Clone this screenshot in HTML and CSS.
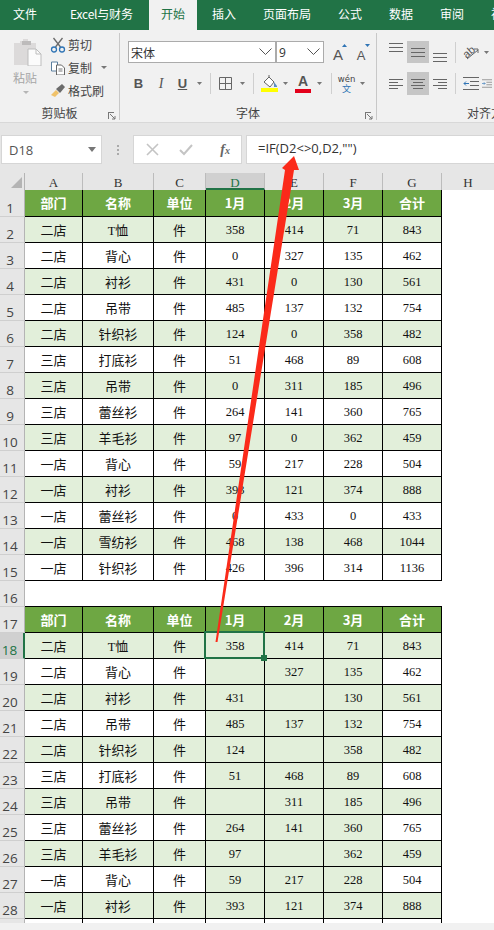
FILE: index.html
```html
<!DOCTYPE html>
<html lang="zh">
<head>
<meta charset="utf-8">
<title>Excel</title>
<link rel="stylesheet" href="styles.css">
</head>
<body>
<div class="app">
  <nav class="tabs">
    <span class="tab first">文件</span>
    <span class="tab wide">Excel与财务</span>
    <span class="tab active">开始</span>
    <span class="tab">插入</span>
    <span class="tab">页面布局</span>
    <span class="tab">公式</span>
    <span class="tab">数据</span>
    <span class="tab">审阅</span>
    <span class="tab">视图</span>
  </nav>

  <section class="ribbon">
    <div class="group g-clip">
      <div class="clip-body">
        <div class="paste">
          <svg width="30" height="28" viewBox="0 0 30 28"><path d="M1 5h6V3h3V1h5v2h3v2h5v22H1z" fill="#dcdada"/><path d="M9 3h9v4H9z" fill="#bdbbbb"/><path d="M15 11h8l5 5v12H15z" fill="#fbfbfb" stroke="#bdbdbd"/><path d="M23 11v5h5" fill="none" stroke="#bdbdbd"/></svg>
          <span class="paste-label">粘贴</span>
          <svg class="caret-s" width="6" height="4" viewBox="0 0 6 4"><path d="M0 0h6L3 3z" fill="#b5b5b5"/></svg>
        </div>
        <div class="clip-list">
          <div class="clip-item">
            <svg width="15" height="16" viewBox="0 0 15 16"><path d="M3 1l7 9M12 1L5 10" stroke="#6a6a6a" stroke-width="1.3" fill="none"/><circle cx="3.5" cy="12.5" r="2.5" fill="none" stroke="#2f74b5" stroke-width="1.3"/><circle cx="11.5" cy="12.5" r="2.5" fill="none" stroke="#2f74b5" stroke-width="1.3"/></svg>
            <span>剪切</span>
          </div>
          <div class="clip-item">
            <svg width="15" height="14" viewBox="0 0 15 14"><path d="M1 1h6v9H1z" fill="#fff" stroke="#5b7f9f"/><path d="M6 4h5l3 3v7H6z" fill="#fff" stroke="#666"/><path d="M8 8h4M8 10h4" stroke="#777"/></svg>
            <span>复制</span>
            <svg class="caret-c" width="6" height="4" viewBox="0 0 6 4"><path d="M0 0h6L3 3z" fill="#777"/></svg>
          </div>
          <div class="clip-item">
            <svg width="16" height="14" viewBox="0 0 16 14"><path d="M1 11l5-5 3 3-4 4z" fill="#f0c26a"/><path d="M6 5l6-5 3 3-5 6z" fill="#6b6b6b"/></svg>
            <span>格式刷</span>
          </div>
        </div>
      </div>
      <div class="group-label">剪贴板<svg class="launcher" width="8" height="8" viewBox="0 0 8 8"><path d="M0 .5h6M.5 0v7M2 2l5 5M4 7h3V4" stroke="#777" fill="none"/></svg></div>
    </div>

    <div class="group g-font">
      <div class="group-body">
        <div class="row">
          <div class="field f-name"><span>宋体</span><svg width="13" height="8" viewBox="0 0 13 8"><path d="M.5.5l6 6 6-6" stroke="#555" fill="none"/></svg></div>
          <div class="field f-size"><span>9</span><svg width="13" height="8" viewBox="0 0 13 8"><path d="M.5.5l6 6 6-6" stroke="#555" fill="none"/></svg></div>
          <div class="grow-a">
            <span class="big-a">A</span><svg class="tick up" width="5" height="3" viewBox="0 0 5 3"><path d="M0 3h5L2.500 0z" fill="#2f74b5"/></svg>
          </div>
          <div class="grow-a second">
            <span class="small-a">A</span><svg class="tick" width="5" height="3" viewBox="0 0 5 3"><path d="M0 0h5L2.500 3z" fill="#2f74b5"/></svg>
          </div>
        </div>
        <div class="row">
          <span class="slot w21 fmt bold">B</span>
          <span class="slot w24 fmt ital">I</span>
          <span class="slot w19 fmt under">U</span>
          <span class="slot w15"><svg width="5" height="3" viewBox="0 0 5 3"><path d="M0 0h5L2.500 3z" fill="#777"/></svg></span>
          <span class="slot w6"><i class="sep"></i></span>
          <span class="slot w25"><svg width="13" height="13" viewBox="0 0 13 13"><path d="M.5.500h12v12H.5zM6.500.500v12M.5 6.500h12" stroke="#666" fill="none"/></svg></span>
          <span class="slot w9"><svg width="5" height="3" viewBox="0 0 5 3"><path d="M0 0h5L2.500 3z" fill="#777"/></svg></span>
          <span class="slot w12"><i class="sep"></i></span>
          <span class="slot w20"><svg width="17" height="17" viewBox="0 0 17 17"><path d="M3 7l5-5 5 5-4 5z" fill="#fff" stroke="#666"/><path d="M8 0v3" stroke="#666"/><path d="M13 7l3 4v1h-3z" fill="#5b8fc0"/><path d="M0 13h17v4H0z" fill="#ffff00"/></svg></span>
          <span class="slot w13"><svg width="5" height="3" viewBox="0 0 5 3"><path d="M0 0h5L2.500 3z" fill="#777"/></svg></span>
          <span class="slot w22 color-a"><b>A</b><i class="red-bar"></i></span>
          <span class="slot w11"><svg width="5" height="3" viewBox="0 0 5 3"><path d="M0 0h5L2.500 3z" fill="#777"/></svg></span>
          <span class="slot w12"><i class="sep"></i></span>
          <span class="slot w19 wen"><span class="wen-top">wén</span><span class="wen-bot">文</span></span>
          <span class="slot w13"><svg width="5" height="3" viewBox="0 0 5 3"><path d="M0 0h5L2.500 3z" fill="#777"/></svg></span>
        </div>
      </div>
      <div class="group-label">字体<svg class="launcher" width="8" height="8" viewBox="0 0 8 8"><path d="M0 .5h6M.5 0v7M2 2l5 5M4 7h3V4" stroke="#777" fill="none"/></svg></div>
    </div>

    <div class="group g-align">
      <div class="group-body">
        <div class="row">
          <span class="slot w22 a-top"><svg width="14" height="9" viewBox="0 0 14 9"><path d="M0 .5h14M0 4.500h14M0 8.500h14" stroke="#666"/></svg></span>
          <span class="slot w22 on"><svg width="14" height="9" viewBox="0 0 14 9"><path d="M0 .5h14M0 4.500h14M0 8.500h14" stroke="#666"/></svg></span>
          <span class="slot w22 a-bot"><svg width="14" height="9" viewBox="0 0 14 9"><path d="M0 .5h14M0 4.500h14M0 8.500h14" stroke="#666"/></svg></span>
          <span class="slot w8"><i class="sep"></i></span>
          <span class="slot w23"><svg width="18" height="17" viewBox="0 0 18 17"><text class="ab" x="1" y="11" transform="rotate(-40 8 8)">ab</text><path d="M5 15l11-9M12 5h4v4" stroke="#666" fill="none"/></svg></span>
          <span class="slot w8"><svg width="5" height="3" viewBox="0 0 5 3"><path d="M0 0h5L2.500 3z" fill="#777"/></svg></span>
        </div>
        <div class="row">
          <span class="slot w22"><svg width="14" height="10" viewBox="0 0 14 10"><path d="M0 .5h14M0 3.500h9M0 6.500h14M0 9.500h9" stroke="#666"/></svg></span>
          <span class="slot w22 on"><svg width="14" height="10" viewBox="0 0 14 10"><path d="M0 .5h14M2 3.500h10M0 6.500h14M2 9.500h10" stroke="#666"/></svg></span>
          <span class="slot w22"><svg width="14" height="10" viewBox="0 0 14 10"><path d="M0 .5h14M5 3.500h9M0 6.500h14M5 9.500h9" stroke="#666"/></svg></span>
          <span class="slot w8"><i class="sep"></i></span>
          <span class="slot w23"><svg width="16" height="13" viewBox="0 0 16 13"><path d="M0 .5h16M7 4.500h9M7 8.500h9M0 12.500h16" stroke="#666"/><path d="M6 6.500H1M3 4.500l-2 2 2 2" stroke="#2f74b5" fill="none"/></svg></span>
          <span class="slot w10"><svg width="16" height="13" viewBox="0 0 16 13"><path d="M0 6.500h5M3 4.500l2 2-2 2" stroke="#2f74b5" fill="none"/><path d="M0 .5h16M7 4.500h9M7 8.500h9M0 12.500h16" stroke="#666"/></svg></span>
        </div>
      </div>
      <div class="group-label label-left">对齐方式</div>
    </div>
  </section>

  <section class="formula">
    <div class="namebox"><span>D18</span><svg width="8" height="5" viewBox="0 0 8 5"><path d="M0 0h8L4 5z" fill="#777"/></svg></div>
    <div class="dots"><i></i><i></i><i></i></div>
    <div class="fx-box">
      <svg width="13" height="13" viewBox="0 0 13 13"><path d="M1 1l11 11M12 1L1 12" stroke="#c4c4c4" stroke-width="1.600"/></svg>
      <svg width="14" height="12" viewBox="0 0 14 12"><path d="M1 6l4 4 8-9" stroke="#c4c4c4" stroke-width="2" fill="none"/></svg>
      <span class="fx">f<small>x</small></span>
    </div>
    <div class="formula-input">=IF(D2&lt;&gt;0,D2,"")</div>
  </section>

  <div class="sheet">
    <table>
      <colgroup><col class="c-rh"><col class="c-a"><col class="c-b"><col class="c-c"><col class="c-n"><col class="c-n"><col class="c-n"><col class="c-n"><col class="c-h"></colgroup>
      <tr class="cols"><th class="corner"><svg width="11" height="11" viewBox="0 0 11 11"><path d="M11 0v11H0z" fill="#b4b4b4"/></svg></th><th>A</th><th>B</th><th>C</th><th class="col-on">D</th><th>E</th><th>F</th><th>G</th><th>H</th></tr>
      <tr class="head first-head"><th>1</th><td>部门</td><td>名称</td><td>单位</td><td>1月</td><td>2月</td><td>3月</td><td>合计</td></tr>
      <tr class="alt"><th>2</th><td>二店</td><td><span class="num">T</span>恤</td><td>件</td><td class="num">358</td><td class="num">414</td><td class="num">71</td><td class="num">843</td></tr>
      <tr><th>3</th><td>二店</td><td>背心</td><td>件</td><td class="num">0</td><td class="num">327</td><td class="num">135</td><td class="num">462</td></tr>
      <tr class="alt"><th>4</th><td>二店</td><td>衬衫</td><td>件</td><td class="num">431</td><td class="num">0</td><td class="num">130</td><td class="num">561</td></tr>
      <tr><th>5</th><td>二店</td><td>吊带</td><td>件</td><td class="num">485</td><td class="num">137</td><td class="num">132</td><td class="num">754</td></tr>
      <tr class="alt"><th>6</th><td>二店</td><td>针织衫</td><td>件</td><td class="num">124</td><td class="num">0</td><td class="num">358</td><td class="num">482</td></tr>
      <tr><th>7</th><td>三店</td><td>打底衫</td><td>件</td><td class="num">51</td><td class="num">468</td><td class="num">89</td><td class="num">608</td></tr>
      <tr class="alt"><th>8</th><td>三店</td><td>吊带</td><td>件</td><td class="num">0</td><td class="num">311</td><td class="num">185</td><td class="num">496</td></tr>
      <tr><th>9</th><td>三店</td><td>蕾丝衫</td><td>件</td><td class="num">264</td><td class="num">141</td><td class="num">360</td><td class="num">765</td></tr>
      <tr class="alt"><th>10</th><td>三店</td><td>羊毛衫</td><td>件</td><td class="num">97</td><td class="num">0</td><td class="num">362</td><td class="num">459</td></tr>
      <tr><th>11</th><td>一店</td><td>背心</td><td>件</td><td class="num">59</td><td class="num">217</td><td class="num">228</td><td class="num">504</td></tr>
      <tr class="alt"><th>12</th><td>一店</td><td>衬衫</td><td>件</td><td class="num">393</td><td class="num">121</td><td class="num">374</td><td class="num">888</td></tr>
      <tr><th>13</th><td>一店</td><td>蕾丝衫</td><td>件</td><td class="num">0</td><td class="num">433</td><td class="num">0</td><td class="num">433</td></tr>
      <tr class="alt"><th>14</th><td>一店</td><td>雪纺衫</td><td>件</td><td class="num">468</td><td class="num">138</td><td class="num">468</td><td class="num">1044</td></tr>
      <tr><th>15</th><td>一店</td><td>针织衫</td><td>件</td><td class="num">426</td><td class="num">396</td><td class="num">314</td><td class="num">1136</td></tr>
      <tr class="blank"><th>16</th><td colspan="7"></td></tr>
      <tr class="head"><th>17</th><td>部门</td><td>名称</td><td>单位</td><td>1月</td><td>2月</td><td>3月</td><td>合计</td></tr>
      <tr class="alt two"><th class="row-on">18</th><td>二店</td><td><span class="num">T</span>恤</td><td>件</td><td class="num current">358<i class="sel"><i class="handle"></i></i></td><td class="num">414</td><td class="num">71</td><td class="num">843</td></tr>
      <tr class="two"><th>19</th><td>二店</td><td>背心</td><td>件</td><td class="num"></td><td class="num">327</td><td class="num">135</td><td class="num">462</td></tr>
      <tr class="alt two"><th>20</th><td>二店</td><td>衬衫</td><td>件</td><td class="num">431</td><td class="num"></td><td class="num">130</td><td class="num">561</td></tr>
      <tr class="two"><th>21</th><td>二店</td><td>吊带</td><td>件</td><td class="num">485</td><td class="num">137</td><td class="num">132</td><td class="num">754</td></tr>
      <tr class="alt two"><th>22</th><td>二店</td><td>针织衫</td><td>件</td><td class="num">124</td><td class="num"></td><td class="num">358</td><td class="num">482</td></tr>
      <tr class="two"><th>23</th><td>三店</td><td>打底衫</td><td>件</td><td class="num">51</td><td class="num">468</td><td class="num">89</td><td class="num">608</td></tr>
      <tr class="alt two"><th>24</th><td>三店</td><td>吊带</td><td>件</td><td class="num"></td><td class="num">311</td><td class="num">185</td><td class="num">496</td></tr>
      <tr class="two"><th>25</th><td>三店</td><td>蕾丝衫</td><td>件</td><td class="num">264</td><td class="num">141</td><td class="num">360</td><td class="num">765</td></tr>
      <tr class="alt two"><th>26</th><td>三店</td><td>羊毛衫</td><td>件</td><td class="num">97</td><td class="num"></td><td class="num">362</td><td class="num">459</td></tr>
      <tr class="two"><th>27</th><td>一店</td><td>背心</td><td>件</td><td class="num">59</td><td class="num">217</td><td class="num">228</td><td class="num">504</td></tr>
      <tr class="alt two"><th>28</th><td>一店</td><td>衬衫</td><td>件</td><td class="num">393</td><td class="num">121</td><td class="num">374</td><td class="num">888</td></tr>
      <tr class="last"><th></th><td></td><td></td><td></td><td></td><td></td><td></td><td></td></tr>
    </table>
  </div>
  <div class="hscroll"></div>

  <svg class="arrow" width="494" height="930" viewBox="0 0 494 930"><path d="M215.500 642L285 170 282 168 294 156 299 170 294 170 217.500 642z" fill="#fb2a1a"/></svg>
</div>
</body>
</html>
```
FILE: styles.css
```css
* { box-sizing: border-box; }
html, body { margin: 0; padding: 0; }
body { width: 494px; height: 930px; overflow: hidden; background: #fff; font-family: "Noto Sans CJK SC", sans-serif; }
.app { position: relative; width: 494px; height: 930px; overflow: hidden; display: flex; flex-direction: column; }

/* tabs */
.tabs { height: 30px; flex: none; background: #217346; display: flex; align-items: stretch; gap: 3px; white-space: nowrap; color: #fff; font-size: 12px; }
.tab { padding: 0 12px; line-height: 27px; flex: none; }
.tab.first { margin-left: 1px; margin-right: 6px; }
.tab.wide { width: 88px; letter-spacing: -0.2px; }
.tab.active { background: #f1f1f1; color: #217346; margin-left: 0; }

/* ribbon */
.ribbon { height: 93px; flex: none; display: flex; background: #f1f1f1; border-bottom: 1px solid #d8d8d8; color: #444; font-size: 12px; overflow: hidden; }
.group { flex: none; display: flex; flex-direction: column; border-right: 1px solid #c8c8c8; margin: 3px 0 2px; position: relative; }
.g-clip { width: 120px; }
.g-font { width: 257px; padding-left: 8px; }
.g-align { flex: 1; padding-left: 8px; border-right: 0; min-width: 0; }
.group-body { flex: 1; display: flex; flex-direction: column; gap: 9px; padding-top: 8px; }
.group-label { height: 17px; line-height: 20px; text-align: center; color: #444; flex: none; }
.g-font .group-label { padding-right: 8px; }
.label-left { text-align: left; padding-left: 82px; white-space: nowrap; }
.launcher { position: absolute; right: 3px; bottom: 0; }

.clip-body { flex: 1; display: flex; padding-left: 13px; min-height: 0; }
.paste { width: 37px; display: flex; flex-direction: column; align-items: flex-start; padding-top: 5px; }
.paste-label { color: #a6a6a6; line-height: 16px; margin-top: 4px; }
.caret-s { margin: 5px 0 0 10px; }
.clip-list { display: flex; flex-direction: column; }
.clip-item { height: 23px; display: flex; align-items: center; white-space: nowrap; }
.clip-item svg:first-child { width: 16px; margin-right: 2px; }
.caret-c { margin-left: 9px; }

.row { display: flex; height: 22px; align-items: center; flex: none; }
.row + .row { height: 23px; }
.field { height: 22px; border: 1px solid #ababab; background: #fff; display: flex; align-items: center; justify-content: space-between; padding: 0 3px 0 2px; font-size: 12px; color: #333; }
.f-name { width: 148px; }
.f-size { width: 48px; margin-left: 0; padding-right: 3px; border-left: 1px solid #ababab; font-family: "Open Sans", sans-serif; }
.grow-a { position: relative; width: 14px; margin-left: 7px; height: 20px; display: flex; align-items: flex-end; justify-content: center; font-family: "Liberation Sans", sans-serif; color: #555; line-height: 1; }
.grow-a.second { margin-left: 9px; }
.big-a { font-size: 15px; }
.small-a { font-size: 13px; }
.tick { position: absolute; right: -2px; top: 2px; }

.slot { flex: none; height: 100%; display: flex; align-items: center; justify-content: center; position: relative; }
.w6 { width: 6px; } .w8 { width: 8px; } .w9 { width: 9px; } .w10 { width: 10px; justify-content: flex-start; overflow: hidden; } .w11 { width: 11px; } .w12 { width: 12px; } .w13 { width: 13px; } .w15 { width: 15px; } .w19 { width: 19px; } .w20 { width: 20px; } .w21 { width: 21px; } .w22 { width: 22px; } .w23 { width: 23px; } .w24 { width: 24px; } .w25 { width: 25px; }
.sep { display: block; width: 1px; height: 21px; background: #cfcfcf; }
.fmt { font-family: "Liberation Sans", sans-serif; font-size: 13px; color: #555; }
.bold { font-weight: 700; }
.ital { font-style: italic; font-family: "Liberation Serif", serif; font-size: 14px; }
.under { text-decoration: underline; font-weight: 700; }
.color-a { flex-direction: column; justify-content: flex-start; }
.color-a b { font: 700 14px/16px "Liberation Sans", sans-serif; color: #555; margin-top: 1px; }
.red-bar { display: block; width: 16px; height: 4px; background: #e3001b; }
.wen { flex-direction: column; line-height: 1; }
.wen-top { font: 8.500px/10px "DejaVu Sans", sans-serif; color: #444; }
.wen-bot { font-size: 9px; line-height: 10px; color: #2f74b5; }
.on { background: #c6c6c6; }
.a-top svg { transform: translateY(-5px); }
.a-bot svg { transform: translateY(5px); }
.ab { font: 11px "Liberation Sans", sans-serif; fill: #555; }

/* formula bar */
.formula { height: 50px; flex: none; background: #e6e6e6; display: flex; padding: 12px 0 9px 1px; }
.namebox { width: 101px; flex: none; background: #fff; border: 1px solid #d6d6d6; display: flex; align-items: center; justify-content: space-between; padding: 0 5px 0 7px; font: 13px "Open Sans", sans-serif; color: #555; }
.dots { width: 31px; flex: none; display: flex; flex-direction: column; align-items: center; justify-content: center; gap: 2px; }
.dots i { display: block; width: 2px; height: 2px; background: #aaa; }
.fx-box { width: 109px; flex: none; background: #fff; border: 1px solid #d6d6d6; display: flex; align-items: center; justify-content: space-between; padding: 0 11px 0 12px; }
.fx { font: italic 700 14px "Liberation Serif", serif; color: #666; margin-left: 8px; }
.fx small { font-size: 10px; }
.formula-input { flex: 1; margin-left: 4px; background: #fff; border: 1px solid #d6d6d6; border-right: 0; padding-left: 11px; font: 13px/25px "Open Sans", sans-serif; color: #333; white-space: nowrap; overflow: hidden; }

/* sheet */
.sheet { height: 750px; flex: none; overflow: hidden; background: #fff; }
table { border-collapse: separate; border-spacing: 0; table-layout: fixed; width: 494px; }
.c-rh { width: 25px; } .c-a { width: 58px; } .c-b { width: 71px; } .c-c { width: 52px; } .c-n { width: 59px; } .c-h { width: 52px; }
tr { height: 26px; }
th, td { padding: 0; height: 26px; line-height: 14px; overflow: visible; }
td { border-right: 1px solid #000; border-bottom: 1px solid #000; text-align: center; font: 13px/14px "Noto Sans CJK SC", sans-serif; color: #111; padding-top: 1px; background: #fff; }
.num { font-family: "Liberation Serif", "Noto Sans CJK SC", serif; font-size: 12.500px; }
tr > th:first-child { background: #e6e6e6; border-right: 1px solid #b4b4b4; border-bottom: 1px solid #cfcfcf; font: 13.500px/14px "Open Sans", sans-serif; color: #444; vertical-align: bottom; padding-bottom: 1px; padding-right: 4px; }
.cols { height: 17px; }
.cols th { height: 17px; background: #e6e6e6; border-right: 1px solid #bcbcbc; font: 13px/11px "Liberation Serif", serif; color: #333; padding-top: 4px; text-align: center; vertical-align: top; }
.cols th:last-child { border-right: 0; }
tr.cols > th.corner { padding: 0 2px 2px 0; text-align: right; line-height: 0; vertical-align: bottom; border-bottom: 0; }
.cols .col-on { background: #d0d0d0; border-bottom: 2px solid #217346; color: #217346; }
.first-head, .first-head td, .first-head th { height: 27px; }
.head td { background: #6ea743; color: #fff; font-weight: 700; font-size: 13px; padding-top: 0; }
.alt td { background: #e2efda; }
.two td:nth-child(n+5):nth-child(-n+7) { background: #e2efda; }
.blank td { border-right: 0; }
tr > th.row-on { background: #d0d0d0; color: #217346; border-right: 2px solid #217346; }
.current { position: relative; }
.sel { position: absolute; display: block; left: -2px; top: -2px; right: -1px; bottom: -1px; border: 2px solid #217346; }
.handle { position: absolute; display: block; width: 6px; height: 6px; right: -4px; bottom: -4px; background: #217346; }
.hscroll { flex: 1; background: #f1f1f1; }
.arrow { position: absolute; left: 0; top: 0; pointer-events: none; }
```
